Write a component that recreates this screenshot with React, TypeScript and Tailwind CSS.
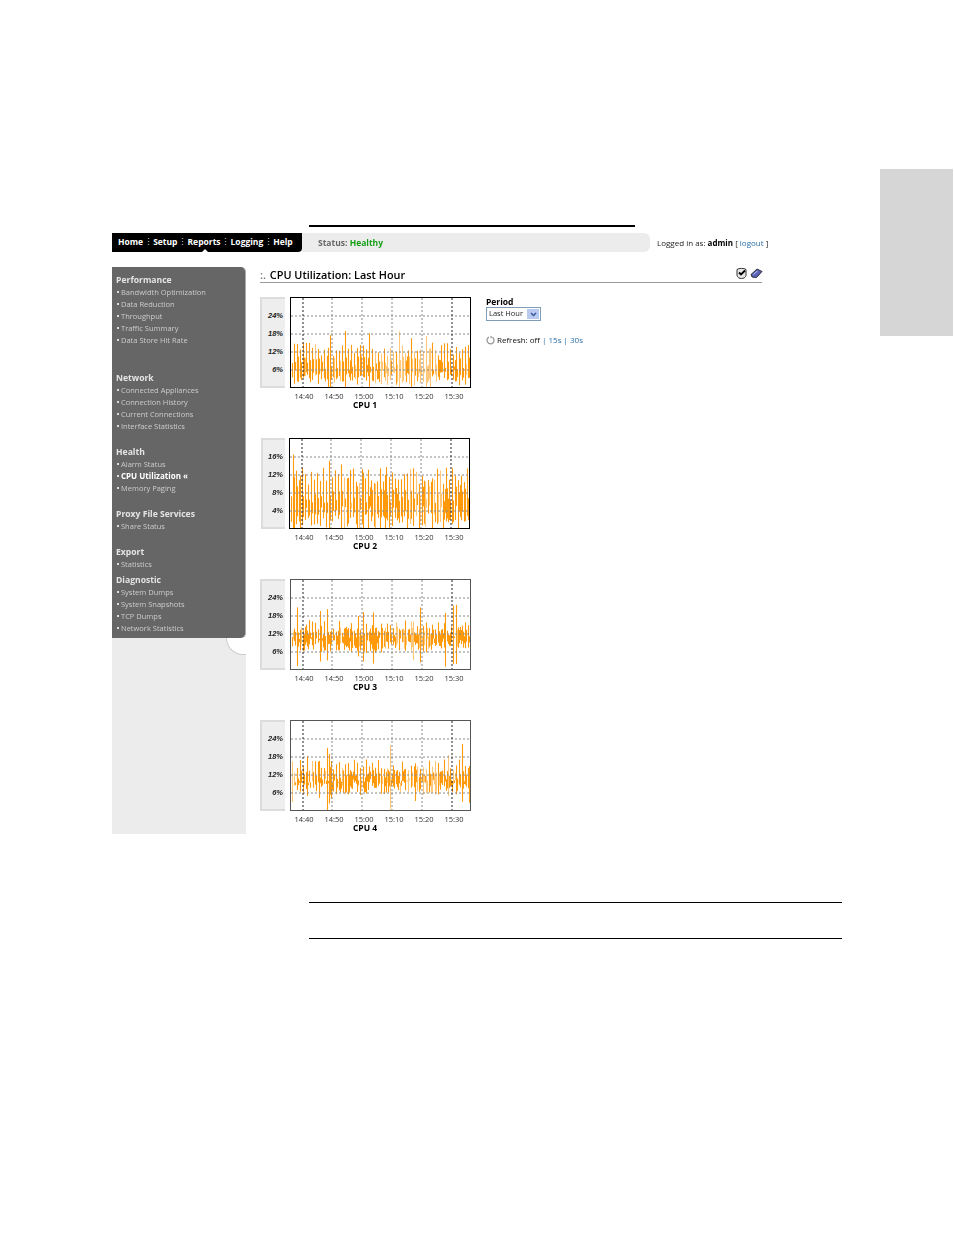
const CHARTS = [
  { name: 'CPU 1', labels: ['24%', '18%', '12%', '6%'], dark: true, seed: 7, tallTop: 44, tallBottom: 74, shortTop: 58, shortBottom: 72, spread: 14, fill: 0.2, light: [88, 145], row: 'gap-[5px]', label: 'w-[25px]' },
  { name: 'CPU 2', labels: ['16%', '12%', '8%', '4%'], dark: true, seed: 23, tallTop: 28, tallBottom: 74, shortTop: 46, shortBottom: 66, spread: 18, fill: 0.2, light: [118, 150], row: 'ml-[1px] gap-[4px]', label: 'w-[24px]' },
  { name: 'CPU 3', labels: ['24%', '18%', '12%', '6%'], dark: false, seed: 41, tallTop: 40, tallBottom: 60, shortTop: 46, shortBottom: 58, spread: 13, fill: 0.6, light: [105, 140], row: 'gap-[5px]', label: 'w-[25px]' },
  { name: 'CPU 4', labels: ['24%', '18%', '12%', '6%'], dark: false, seed: 59, tallTop: 38, tallBottom: 60, shortTop: 48, shortBottom: 58, spread: 14, fill: 0.6, light: [115, 150], row: 'gap-[5px]', label: 'w-[25px]' },
]

const NAV = ['Home', 'Setup', 'Reports', 'Logging', 'Help']

const MENU = [
  { title: 'Performance', gap: 'mb-[26px]', items: ['Bandwidth Optimization', 'Data Reduction', 'Throughput', 'Traffic Summary', 'Data Store Hit Rate'] },
  { title: 'Network', gap: 'mb-[14px]', items: ['Connected Appliances', 'Connection History', 'Current Connections', 'Interface Statistics'] },
  { title: 'Health', gap: 'mb-[14px]', items: ['Alarm Status', 'CPU Utilization «', 'Memory Paging'] },
  { title: 'Proxy File Services', gap: 'mb-[14px]', items: ['Share Status'] },
  { title: 'Export', gap: 'mb-[4px]', items: ['Statistics'] },
  { title: 'Diagnostic', gap: '', items: ['System Dumps', 'System Snapshots', 'TCP Dumps', 'Network Statistics'] },
]

// small repeatable noise so the traces stay the same between runs
function noise(seed: number, i: number) {
  const v = Math.sin(seed * 12.9898 + i * 78.233) * 43758.5453
  return v - Math.floor(v)
}

function Plot({ chart }: { chart: (typeof CHARTS)[number] }) {
  const ticks = [12, 41, 71, 101, 131, 161]
  const rows = [18, 36, 54, 72]
  const bars = []
  for (let x = 1; x < 179; x++) {
    const tall = x % 3 === 0
    if (x % 3 === 2 && noise(chart.seed + 5, x) > chart.fill) continue
    const top = tall ? chart.tallTop : chart.shortTop
    const bottom = tall ? chart.tallBottom : chart.shortBottom
    const spike = noise(chart.seed + 3, x) > 0.94 ? 16 : 0
    const y1 = top + noise(chart.seed, x) * chart.spread - spike
    const y2 = bottom + noise(chart.seed + 1, x) * chart.spread + spike
    const inLight = x >= chart.light[0] && x <= chart.light[1]
    bars.push(
      <line
        key={x}
        x1={x + 0.5}
        x2={x + 0.5}
        y1={y1}
        y2={Math.min(y2, 89)}
        stroke={noise(chart.seed + 4, x) > (inLight ? 0.45 : 0.93) ? '#ffc777' : '#ff9a0a'}
        strokeWidth="1.1"
      />,
    )
  }
  return (
    <svg width="181" height="91" viewBox="0 0 179 89" className={`border ${chart.dark ? 'border-black' : 'border-[#555]'}`}>
      {bars}
      {rows.map((y) => (
        <line key={y} x1="0" x2="179" y1={y} y2={y} stroke="#888" strokeDasharray="2 2" />
      ))}
      {ticks.map((x, i) => (
        <line key={x} x1={x} x2={x} y1="0" y2="89" stroke={i === 0 || i === 5 ? '#222' : '#888'} strokeDasharray="2 2" />
      ))}
    </svg>
  )
}

function Chart({ chart }: { chart: (typeof CHARTS)[number] }) {
  return (
    <div className="h-[141px]">
      <div className={`flex ${chart.row}`}>
        <div className={`flex h-[91px] ${chart.label} flex-col items-end border-2 border-r-0 border-[#dcdcdc] bg-[#eeeeee] pt-[8px] pr-[2px] font-['Liberation_Sans',sans-serif] text-[7.5px] leading-[18px] font-bold italic text-[#222]`}>
          {chart.labels.map((l) => (
            <span key={l}>{l}</span>
          ))}
        </div>
        <Plot chart={chart} />
      </div>
      <div className="ml-[29px] flex w-[182px] pt-[3px] text-[7.5px] leading-[10px] text-[#333]">
        {['14:40', '14:50', '15:00', '15:10', '15:20', '15:30'].map((t) => (
          <span key={t} className="w-[30px] text-center">{t}</span>
        ))}
      </div>
      <div className="ml-[29px] w-[152px] text-center text-[8.5px] leading-[8px] font-bold text-black">{chart.name}</div>
    </div>
  )
}

function Sidebar() {
  return (
    <div className="w-[134px]">
      <div className="h-[371px] rounded-tr-[5px] rounded-br-[5px] border-r border-[#aaaaaa] bg-[#666666] pt-[7px] pl-[4px]">
        {MENU.map((group) => (
          <div key={group.title} className={group.gap}>
            <div className="text-[8.6px] leading-[12px] font-bold text-[#e4e4e4]">{group.title}</div>
            {group.items.map((item) => {
              const active = item.startsWith('CPU')
              return (
                <div key={item} className={`flex items-center whitespace-nowrap leading-[12px] ${active ? 'text-[8px] font-bold text-white' : 'text-[7.5px] text-[#cccccc]'}`}>
                  <span className="mr-[2px] ml-[1px] h-[2px] w-[2px] bg-[#dddddd]" />{item}
                </div>
              )
            })}
          </div>
        ))}
      </div>
      <div className="relative h-[196px] bg-[#ececec]">
        <div className="absolute top-0 right-0 h-[17px] w-[20px] rounded-bl-[17px] border-b border-l border-[#cccccc] bg-white" />
      </div>
    </div>
  )
}

function Controls() {
  return (
    <div className="ml-[15px] text-[8px]">
      <div className="text-[8.5px] leading-[9px] font-bold text-black">Period</div>
      <div className="mt-[1px] flex h-[14px] w-[55px] items-center justify-between border border-[#7f9db9] pr-[1px] pl-[2px] text-[7.5px] text-[#222]">
        Last Hour
        <span className="flex h-[10px] w-[12px] items-center justify-center bg-[#b9c9ef]">
          <svg width="7" height="5" viewBox="0 0 7 5"><path d="M1 1l2.5 2.5L6 1" fill="none" stroke="#3a5a9a" strokeWidth="1.5" /></svg>
        </span>
      </div>
      <div className="mt-[14px] flex items-center gap-[2px] leading-[10px] text-[#111]">
        <svg width="9" height="10" viewBox="0 0 9 10">
          <path d="M3 2.2a3.5 3.5 0 1 0 3.4.2" fill="none" stroke="#999" strokeWidth="1.3" />
          <path d="M4.5 0.5v3l2-1.5z" fill="#999" />
        </svg>
        <span>Refresh: off <span className="text-[#2a6fa8]">| 15s | 30s</span></span>
      </div>
    </div>
  )
}

export default function App() {
  return (
    <div className="flex h-[1235px] w-[954px] bg-white font-['Open_Sans',sans-serif]">
      <div className="w-[880px] shrink-0 pt-[225px]">
        <div className="ml-[309px] h-[2px] w-[326px] bg-black" />
        <div className="mt-[6px] ml-[112px] blur-[0.4px]">
          <div className="flex h-[19px] items-stretch">
            <div className="relative flex w-[190px] shrink-0 items-center rounded-br-[4px] bg-black pl-[6px] text-[8.5px] font-bold text-white">
              {NAV.map((n, i) => (
                <span key={n} className="flex items-center">
                  {i > 0 && <span className="w-[10px] text-center font-normal text-[#ccc]">⋮</span>}
                  {n}
                </span>
              ))}
              <span className="absolute bottom-0 left-[90px] border-x-[3px] border-b-[3px] border-x-transparent border-b-white" />
            </div>
            <div className="flex w-[348px] items-center rounded-r-[6px] bg-[#ececec] pt-px pl-[16px] text-[8.5px] font-bold text-[#666]">
              Status:&nbsp;<span className="text-[#16a016]">Healthy</span>
            </div>
            <div className="ml-[7px] flex items-center whitespace-nowrap text-[8px] text-[#222]">
              Logged in as:&nbsp;<b className="text-black">admin</b>&nbsp;[&nbsp;<span className="text-[#2a6fa8]">logout</span>&nbsp;]
            </div>
          </div>
          <div className="mt-[15px] flex">
            <Sidebar />
            <div className="ml-[14px] w-[502px]">
              <div className="flex h-[16px] items-center justify-between border-b border-[#999] text-[10.9px] font-semibold text-black">
                <span className="whitespace-pre pt-[2px]"><span className="mr-[1px] text-[#777]">:. </span>CPU Utilization: Last Hour</span>
                <span className="mr-[-1px] flex items-center gap-[3px] pb-[3px]">
                  <svg width="11" height="12" viewBox="0 0 11 12">
                    <path d="M1 2.5c1.5-1.5 7.5-1.5 9 0v6c-.5 2-2.5 3-4.5 3s-4-1-4.5-3z" fill="#e8e8e8" stroke="#333" />
                    <path d="M3 5.5l2 2 4-4" fill="none" stroke="#000" strokeWidth="1.8" />
                  </svg>
                  <svg width="13" height="11" viewBox="0 0 13 11">
                    <path d="M1 6.5L7 1l5 2.5L6.5 9.5 2 9z" fill="#5a63b8" stroke="#222" strokeWidth="0.9" />
                    <path d="M3.5 6.5L7.5 3" fill="none" stroke="#c8ccf0" strokeWidth="0.9" />
                  </svg>
                </span>
              </div>
              <div className="mt-[14px] flex">
                <div>
                  {CHARTS.map((c) => (
                    <Chart key={c.name} chart={c} />
                  ))}
                </div>
                <Controls />
              </div>
            </div>
          </div>
        </div>
        <div className="mt-[41px] ml-[309px] h-px w-[533px] bg-black" />
        <div className="mt-[35px] ml-[309px] h-px w-[533px] bg-black" />
      </div>
      <div className="mt-[169px] h-[167px] w-[73px] bg-[#d6d6d6]" />
    </div>
  )
}
